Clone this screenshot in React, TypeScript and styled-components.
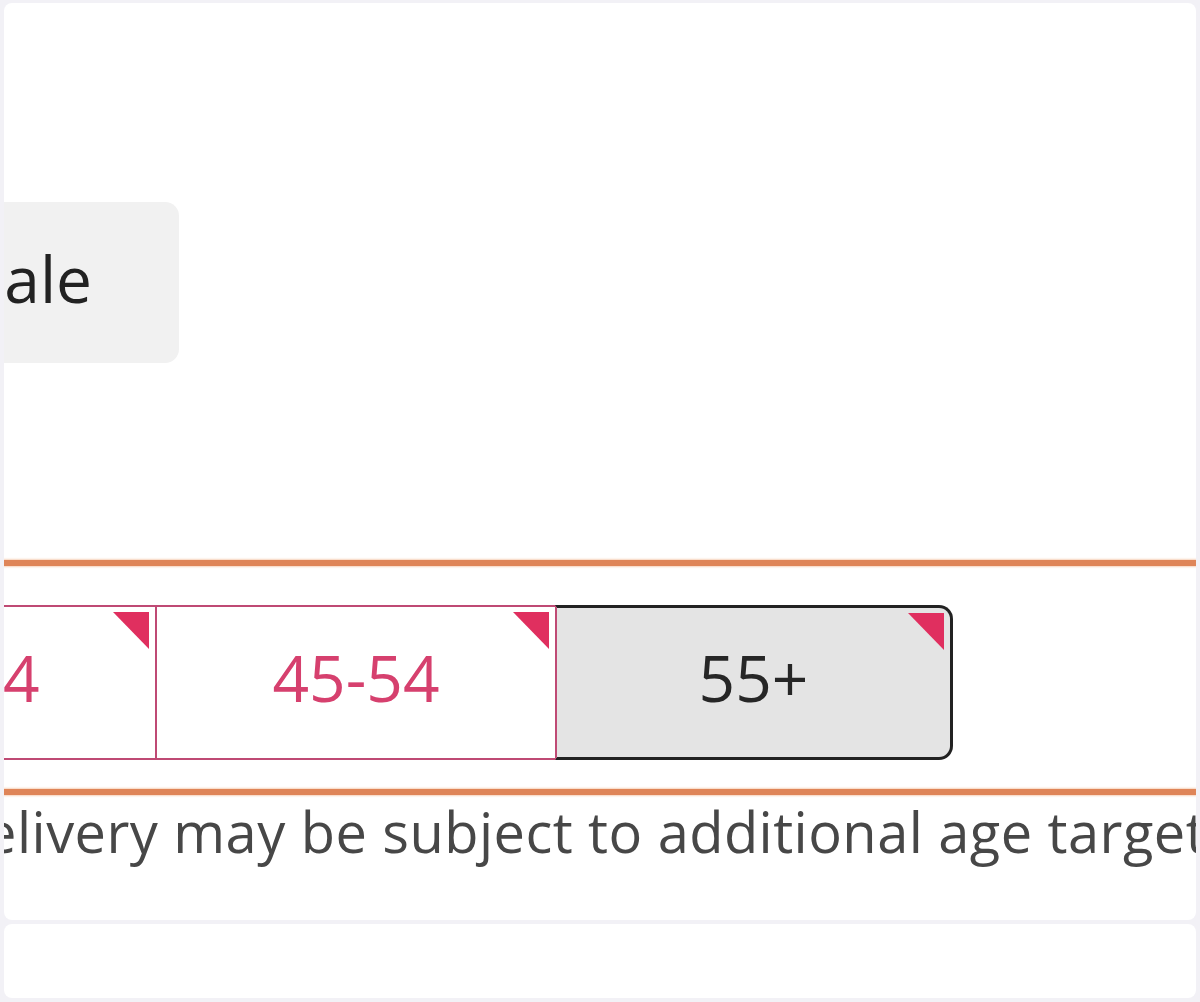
import React from "react";
import styled, { createGlobalStyle } from "styled-components";

const GlobalStyle = createGlobalStyle`
  html, body {
    margin: 0;
    padding: 0;
    background: #f2f1f6;
  }
  body {
    font-family: "Open Sans", "Noto Sans", "Liberation Sans", sans-serif;
  }
`;

const Page = styled.div`
  display: flex;
  flex-direction: column;
  gap: 4px;
  padding: 3px 4px 4px 4px;
  height: 1002px;
  box-sizing: border-box;
`;

const Card = styled.section<{ $grow?: boolean }>`
  background: #ffffff;
  border-radius: 8px;
  overflow: hidden;
  flex: ${(p) => (p.$grow ? "1 1 auto" : "0 0 74px")};
  display: flex;
  flex-direction: column;
`;

const GenderRow = styled.div`
  display: flex;
  margin-top: 199px;
  height: 161px;
`;

const GenderChip = styled.div`
  flex: 0 0 auto;
  width: 400px;
  margin-left: -225px;
  box-sizing: border-box;
  padding: 0 87px 9px 0;
  display: flex;
  align-items: center;
  justify-content: flex-end;
  background: #f1f1f1;
  border-radius: 14px;
  font-size: 64px;
  color: #222222;
`;

const Rule = styled.div<{ $top: number }>`
  margin-top: ${(p) => p.$top}px;
  height: 6px;
  flex: 0 0 6px;
  background: #df8558;
  box-shadow: 0 0 2px 1px #f7d3bc;
`;

const AgeRow = styled.div`
  display: flex;
  margin-top: 39px;
  margin-left: -1049px;
  height: 155px;
`;

const AgeCell = styled.button<{ $selected?: boolean }>`
  position: relative;
  flex: 0 0 ${(p) => (p.$selected ? 398 : 400)}px;
  box-sizing: border-box;
  display: flex;
  align-items: center;
  justify-content: center;
  margin: 0;
  padding: 0 0 10px 0;
  font-family: inherit;
  font-size: 64px;
  border-style: solid;
  border-width: ${(p) => (p.$selected ? "3px 3px 3px 2px" : "2px 0 2px 2px")};
  border-color: ${(p) =>
    p.$selected ? "#222222 #222222 #222222 #bf4a74" : "#bf4a74"};
  border-radius: ${(p) => (p.$selected ? "0 14px 14px 0" : "0")};
  background: ${(p) => (p.$selected ? "#e4e4e4" : "#ffffff")};
  color: ${(p) => (p.$selected ? "#262626" : "#d6406e")};
  cursor: pointer;
`;

/* small flag in the top-right corner of each age option */
const CornerFlag = styled.span`
  position: absolute;
  top: 5px;
  right: 6px;
  width: 36px;
  height: 37px;
  background: #e02f5f;
  clip-path: polygon(0 0, 100% 0, 100% 100%);
`;

const Note = styled.p`
  margin: 2px 0 0 -60px;
  white-space: nowrap;
  font-size: 56px;
  line-height: 68px;
  letter-spacing: 0.45px;
  color: #474747;
`;

const ages = ["18-24", "25-34", "35-44", "45-54", "55+"];

export default function App() {
  return (
    <>
      <GlobalStyle />
      <Page>
        <Card $grow>
          <GenderRow>
            <GenderChip>Female</GenderChip>
          </GenderRow>
          <Rule $top={197} />
          <AgeRow>
            {ages.map((a) => (
              <AgeCell key={a} $selected={a === "55+"}>
                {a}
                <CornerFlag />
              </AgeCell>
            ))}
          </AgeRow>
          <Rule $top={29} />
          <Note>
            Delivery may be subject to additional age targeting restrictions.
          </Note>
        </Card>
        <Card />
      </Page>
    </>
  );
}
